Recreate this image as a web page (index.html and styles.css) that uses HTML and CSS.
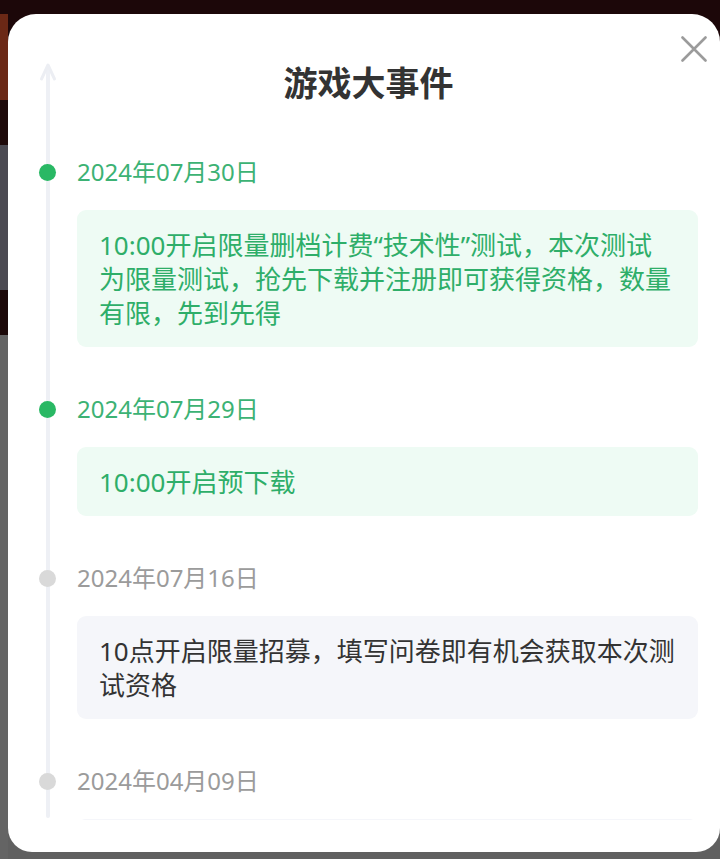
FILE: index.html
```html
<!DOCTYPE html>
<html lang="zh-CN">
<head>
<meta charset="utf-8">
<title>游戏大事件</title>
<link rel="stylesheet" href="styles.css">
</head>
<body>
<div class="modal">
  <div class="rail">
    <svg class="rail-arrow" width="18" height="20" viewBox="0 0 18 20"><path d="M2.5 17 L9 3 L15.5 17" fill="none" stroke="#eceef3" stroke-width="3" stroke-linecap="round" stroke-linejoin="round"/></svg>
  </div>
  <button class="close" aria-label="关闭">
    <svg width="26" height="26" viewBox="0 0 26 26"><path d="M1.5 1.5 L24.5 24.5 M24.5 1.5 L1.5 24.5" stroke="#9b9b9b" stroke-width="2.6" stroke-linecap="round"/></svg>
  </button>
  <h1 class="title">游戏大事件</h1>
  <div class="events">
    <div class="event active">
      <div class="date-row"><span class="dot"></span><span class="date">2024年07月30日</span></div>
      <div class="card">10:00开启限量删档计费“技术性”测试，本次测试为限量测试，抢先下载并注册即可获得资格，数量有限，先到先得</div>
    </div>
    <div class="event active">
      <div class="date-row"><span class="dot"></span><span class="date">2024年07月29日</span></div>
      <div class="card">10:00开启预下载</div>
    </div>
    <div class="event">
      <div class="date-row"><span class="dot"></span><span class="date">2024年07月16日</span></div>
      <div class="card">10点开启限量招募，填写问卷即有机会获取本次测试资格</div>
    </div>
    <div class="event">
      <div class="date-row"><span class="dot"></span><span class="date">2024年04月09日</span></div>
      <div class="card card-empty"></div>
    </div>
  </div>
</div>
</body>
</html>
```
FILE: styles.css
```css
html, body {
  margin: 0;
  padding: 0;
  height: 100%;
}
body {
  overflow: hidden;
  font-family: "Noto Sans", "Noto Sans CJK SC", sans-serif;
  background:
    linear-gradient(to bottom, #1c0709 0 14px, #6b2816 14px 100px, #1e0a0a 100px 145px, #4b4a52 145px 290px, #1c0909 290px 335px, #646464 335px) left top / 8px 100% no-repeat,
    linear-gradient(to bottom, #1c0709 0 335px, #606060 335px);
}
.modal {
  position: relative;
  margin: 14px 0 0 8px;
  width: 712px;
  height: 838px;
  background: #fff;
  border-radius: 28px 28px 24px 24px;
  display: flex;
  flex-direction: column;
  overflow: hidden;
}
.rail {
  position: absolute;
  left: 38px;
  top: 51px;
  width: 4px;
  height: 753px;
  background: #eef0f5;
  border-radius: 2px;
}
.rail-arrow {
  position: absolute;
  left: -7px;
  top: -3px;
}
.close {
  position: absolute;
  right: 13px;
  top: 22px;
  width: 26px;
  height: 26px;
  padding: 0;
  border: 0;
  background: none;
  display: flex;
}
.title {
  margin: 0;
  padding-top: 46px;
  height: 44px;
  line-height: 44px;
  text-align: center;
  font-family: "Noto Sans CJK SC", sans-serif;
  font-size: 34px;
  font-weight: 700;
  color: #333;
  padding-left: 9px;
}
.events {
  position: relative;
  z-index: 1;
  height: 664px;
  padding-top: 52px;
  overflow: hidden;
  display: flex;
  flex-direction: column;
  gap: 46px;
}
.event {
  display: flex;
  flex-direction: column;
  gap: 22px;
}
.date-row {
  display: flex;
  align-items: center;
  height: 32px;
  padding-left: 31px;
  gap: 21px;
}
.dot {
  width: 17px;
  height: 17px;
  border-radius: 50%;
  background: #d9d9d9;
  flex: none;
}
.date {
  font-size: 24px;
  line-height: 32px;
  color: #9b9b9b;
}
.card {
  margin: 0 22px 0 69px;
  padding: 17.5px 20px 17.5px 22px;
  border-radius: 9px;
  background: #f5f6fa;
  color: #333;
  font-size: 26px;
  line-height: 34px;
}
.card-empty {
  min-height: 34px;
}
.event.active .dot {
  background: #29b864;
}
.event.active .date {
  color: #3cb274;
}
.event.active .card {
  background: #eefbf4;
  color: #2eae69;
}
```
